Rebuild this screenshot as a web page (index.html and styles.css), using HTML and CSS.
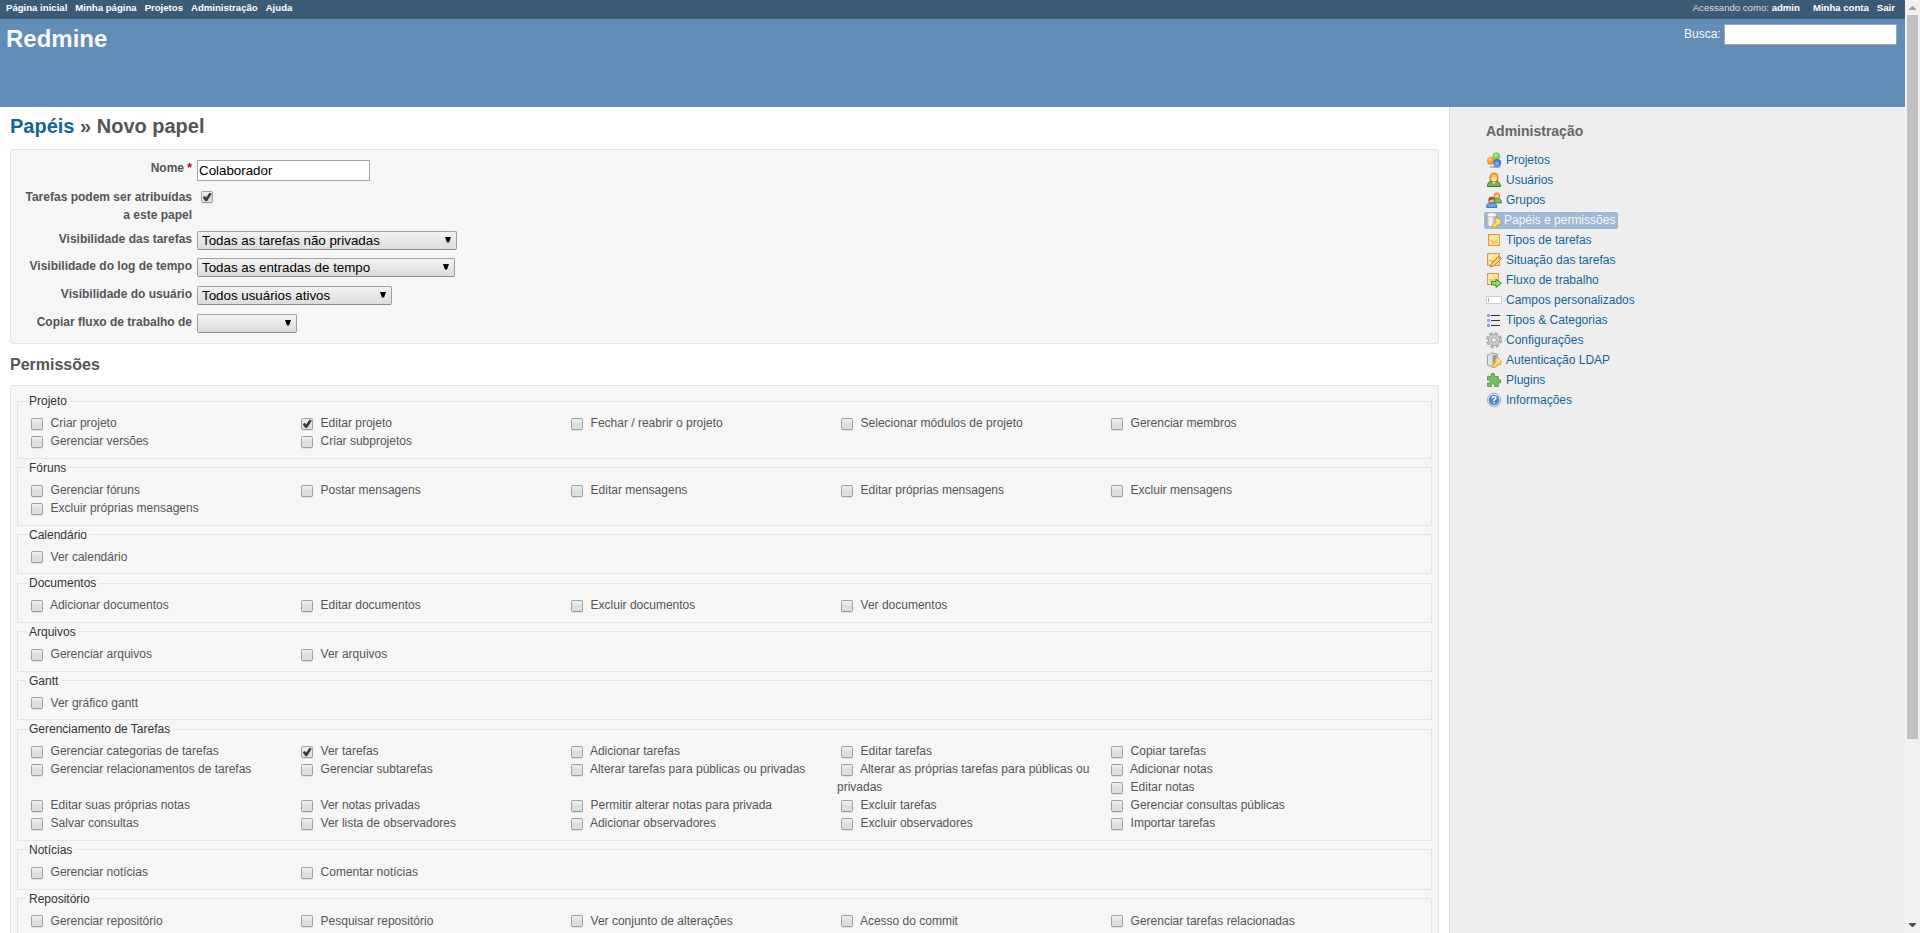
FILE: index.html
```html
<!DOCTYPE html>
<html lang="pt-BR">
<head>
<meta charset="utf-8">
<title>Redmine</title>
<link rel="stylesheet" href="styles.css">
</head>
<body>
<div class="page">
  <nav class="top-menu">
    <div class="menu"><a>Página inicial</a><a>Minha página</a><a>Projetos</a><a>Administração</a><a>Ajuda</a></div>
    <div class="menu account"><span class="logged">Acessando como: <a>admin</a></span><a>Minha conta</a><a>Sair</a></div>
  </nav>
  <header class="header">
    <h1>Redmine</h1>
    <form class="search"><label>Busca:</label><input type="text" class="text-input"></form>
  </header>
  <div class="main">
    <main class="content">
      <h2><a>Papéis</a> » Novo papel</h2>
      <div class="box tabular">
        <div class="row row-name"><label>Nome <span class="required">*</span></label><input type="text" class="text-input" value="Colaborador"></div>
        <div class="row row-assign"><label>Tarefas podem ser atribuídas a este papel</label><input type="checkbox" checked></div>
        <div class="row row-issues"><label>Visibilidade das tarefas</label><div class="select w-issues"><span>Todas as tarefas não privadas</span><svg width="6" height="6" viewBox="0 0 6 6"><path d="M0 0h6L4 5.500H2z"/></svg></div></div>
        <div class="row row-time"><label>Visibilidade do log de tempo</label><div class="select w-time"><span>Todas as entradas de tempo</span><svg width="6" height="6" viewBox="0 0 6 6"><path d="M0 0h6L4 5.500H2z"/></svg></div></div>
        <div class="row row-time"><label>Visibilidade do usuário</label><div class="select w-users"><span>Todos usuários ativos</span><svg width="6" height="6" viewBox="0 0 6 6"><path d="M0 0h6L4 5.500H2z"/></svg></div></div>
        <div class="row row-time"><label>Copiar fluxo de trabalho de</label><div class="select w-copy"><span></span><svg width="6" height="6" viewBox="0 0 6 6"><path d="M0 0h6L4 5.500H2z"/></svg></div></div>
      </div>
      <h3>Permissões</h3>
      <div class="box permissions">
        <fieldset><legend>Projeto</legend>
          <label><input type="checkbox"> Criar projeto</label>
          <label><input type="checkbox" checked> Editar projeto</label>
          <label><input type="checkbox"> Fechar / reabrir o projeto</label>
          <label><input type="checkbox"> Selecionar módulos de projeto</label>
          <label><input type="checkbox"> Gerenciar membros</label>
          <label><input type="checkbox"> Gerenciar versões</label>
          <label><input type="checkbox"> Criar subprojetos</label>
        </fieldset>
        <fieldset><legend>Fóruns</legend>
          <label><input type="checkbox"> Gerenciar fóruns</label>
          <label><input type="checkbox"> Postar mensagens</label>
          <label><input type="checkbox"> Editar mensagens</label>
          <label><input type="checkbox"> Editar próprias mensagens</label>
          <label><input type="checkbox"> Excluir mensagens</label>
          <label><input type="checkbox"> Excluir próprias mensagens</label>
        </fieldset>
        <fieldset><legend>Calendário</legend>
          <label><input type="checkbox"> Ver calendário</label>
        </fieldset>
        <fieldset><legend>Documentos</legend>
          <label><input type="checkbox"> Adicionar documentos</label>
          <label><input type="checkbox"> Editar documentos</label>
          <label><input type="checkbox"> Excluir documentos</label>
          <label><input type="checkbox"> Ver documentos</label>
        </fieldset>
        <fieldset><legend>Arquivos</legend>
          <label><input type="checkbox"> Gerenciar arquivos</label>
          <label><input type="checkbox"> Ver arquivos</label>
        </fieldset>
        <fieldset><legend>Gantt</legend>
          <label><input type="checkbox"> Ver gráfico gantt</label>
        </fieldset>
        <fieldset><legend>Gerenciamento de Tarefas</legend>
          <label><input type="checkbox"> Gerenciar categorias de tarefas</label>
          <label><input type="checkbox" checked> Ver tarefas</label>
          <label><input type="checkbox"> Adicionar tarefas</label>
          <label><input type="checkbox"> Editar tarefas</label>
          <label><input type="checkbox"> Copiar tarefas</label>
          <label><input type="checkbox"> Gerenciar relacionamentos de tarefas</label>
          <label><input type="checkbox"> Gerenciar subtarefas</label>
          <label><input type="checkbox"> Alterar tarefas para públicas ou privadas</label>
          <label><input type="checkbox"> Alterar as próprias tarefas para públicas ou privadas</label>
          <label><input type="checkbox"> Adicionar notas</label>
          <label><input type="checkbox"> Editar notas</label>
          <label><input type="checkbox"> Editar suas próprias notas</label>
          <label><input type="checkbox"> Ver notas privadas</label>
          <label><input type="checkbox"> Permitir alterar notas para privada</label>
          <label><input type="checkbox"> Excluir tarefas</label>
          <label><input type="checkbox"> Gerenciar consultas públicas</label>
          <label><input type="checkbox"> Salvar consultas</label>
          <label><input type="checkbox"> Ver lista de observadores</label>
          <label><input type="checkbox"> Adicionar observadores</label>
          <label><input type="checkbox"> Excluir observadores</label>
          <label><input type="checkbox"> Importar tarefas</label>
        </fieldset>
        <fieldset><legend>Notícias</legend>
          <label><input type="checkbox"> Gerenciar notícias</label>
          <label><input type="checkbox"> Comentar notícias</label>
        </fieldset>
        <fieldset><legend>Repositório</legend>
          <label><input type="checkbox"> Gerenciar repositório</label>
          <label><input type="checkbox"> Pesquisar repositório</label>
          <label><input type="checkbox"> Ver conjunto de alterações</label>
          <label><input type="checkbox"> Acesso do commit</label>
          <label><input type="checkbox"> Gerenciar tarefas relacionadas</label>
        </fieldset>
      </div>
    </main>
    <aside class="sidebar">
      <h3>Administração</h3>
      <svg class="defs" width="0" height="0">
        <defs>
          <radialGradient id="orange" cx=".4" cy=".35"><stop offset="0" stop-color="#ffd27a"/><stop offset="1" stop-color="#f5921a"/></radialGradient>
          <radialGradient id="green" cx=".45" cy=".4"><stop offset="0" stop-color="#c4f19a"/><stop offset="1" stop-color="#66c338"/></radialGradient>
          <radialGradient id="blue" cx=".45" cy=".6"><stop offset="0" stop-color="#8dbcff"/><stop offset="1" stop-color="#2f70e0"/></radialGradient>
          <linearGradient id="note" x1="0" y1="0" x2="1" y2="1"><stop offset="0" stop-color="#fff6c0"/><stop offset="1" stop-color="#f5c93a"/></linearGradient>
          <linearGradient id="metal"><stop offset="0" stop-color="#c4c4c4"/><stop offset=".35" stop-color="#fafafa"/><stop offset="1" stop-color="#a8a8a8"/></linearGradient>
          <symbol id="key" viewBox="0 0 9 10"><path d="M4.500.5 8.500 4 7.500 7 5 7.200 3 9.500H.5V7.200L3 5 2.500 2.500z" fill="#fbd863" stroke="#d99434" stroke-width=".8"/><path d="M4.800 2.200l2 1.800" stroke="#fff6cf" stroke-width="1.100"/></symbol>
          <symbol id="sheet" viewBox="0 0 12 12"><path d="M.6.6h10.800v10.800H.6z" fill="#fff3cf" stroke="#e39b43" stroke-width="1.200"/><path d="M2.200 2.200h7.600v7.600H5L2.200 7z" fill="url(#note)"/><path d="M2.200 7H5v2.800z" fill="#fff" stroke="#d99a32" stroke-width=".7"/></symbol>
        </defs>
      </svg>
      <ul>
        <li><a><svg viewBox="0 0 16 16"><ellipse cx="9" cy="15" rx="6" ry=".7" fill="#999"/><circle cx="10.300" cy="4.200" r="3.600" fill="url(#green)" stroke="#7ccc55" stroke-width=".5"/><circle cx="4.800" cy="8.700" r="3.900" fill="url(#orange)"/><circle cx="11.200" cy="11" r="3.900" fill="url(#blue)"/></svg>Projetos</a></li>
        <li><a><svg viewBox="0 0 16 16"><path d="M1.500 14.500q0-5 4-5.500h4q5 .5 5 5.500z" fill="#6fb858" stroke="#347a2a"/><path d="M5.500 9.500 7.800 12l2.500-2.500" fill="#eaf7dc"/><path d="M4 8.500V4q.6-3 4-3 3.500 0 3.900 3v4.500l-2 1.300H6z" fill="#eda322" stroke="#c87512" stroke-width=".8"/><circle cx="8" cy="6.500" r="2.700" fill="#fddcae"/><path d="M5.200 5.500q3 .3 4-1.500l1.700 1.500V3.500q-3-2.500-5.700 0z" fill="#ffc43d"/></svg>Usuários</a></li>
        <li><a><svg viewBox="0 0 16 16"><path d="M7 11q0-4.500 3-4.500h2q3.500 0 3.500 4.500z" fill="#73be5e" stroke="#3b8330" stroke-width=".8"/><circle cx="11" cy="3.800" r="2.900" fill="#f5c78c" stroke="#b06f22" stroke-width=".8"/><path d="M8 4Q8 .5 11 .5t3 3.500l-2-1.500z" fill="#f2a51d"/><path d="M.5 15.500q0-4.700 3.500-4.700h2.500q4.500 0 4.500 4.700z" fill="#60a7f2" stroke="#2b63ad" stroke-width=".8"/><circle cx="5.600" cy="8.200" r="2.900" fill="#f3c08f" stroke="#7c3e20" stroke-width=".8"/><path d="M2.700 8.700q-.2-4 3-4t3 4L7.100 6.900z" fill="#96512c"/></svg>Grupos</a></li>
        <li><a class="selected"><svg viewBox="0 0 16 16"><path d="M1 3v9.800q0 1.700 4.700 1.700t4.800-1.700V3z" fill="url(#metal)" stroke="#999" stroke-width=".7"/><ellipse cx="5.750" cy="2.800" rx="4.700" ry="2.100" fill="#f7f7f7" stroke="#aaa" stroke-width=".7"/><use href="#key" x="6" y="5" width="10" height="11"/></svg>Papéis e permissões</a></li>
        <li><a><svg viewBox="0 0 16 16"><use href="#sheet" x="2" y="2" width="12" height="12"/></svg>Tipos de tarefas</a></li>
        <li><a><svg viewBox="0 0 16 16"><use href="#sheet" x="1" y="1" width="13" height="13"/><path d="M4.500 15l1-3.500 7.300-7.300 2.700 2.300-7.500 7.300z" fill="#f9cf76" stroke="#ad6c22" stroke-width=".8"/><path d="M12.300 4.800l2.500 2.100" stroke="#d8886d" stroke-width="1.100"/></svg>Situação das tarefas</a></li>
        <li><a><svg viewBox="0 0 16 16"><use href="#sheet" x="1" y="1" width="12" height="12"/><path d="M5.500 9.500h4.500V7l5.500 4.300-5.500 4.200V13H5.500z" fill="#9bd66c" stroke="#31802b" stroke-width=".9"/></svg>Fluxo de trabalho</a></li>
        <li><a><svg viewBox="0 0 16 16"><path d="M.5 4.500h15v7H.5z" fill="#fff" stroke="#ccc"/><path d="M2.500 6v4" stroke="#999" stroke-width=".8"/></svg>Campos personalizados</a></li>
        <li><a><svg viewBox="0 0 16 16"><path d="M5 3.500h9m-9 5h9m-9 5h9" stroke="#333" stroke-width="1"/><path d="M1 2h3v3H1zm0 5h3v3H1zm0 5h3v3H1z" fill="#83aaea"/></svg>Tipos &amp; Categorias</a></li>
        <li><a><svg viewBox="0 0 16 16"><circle cx="8" cy="8" r="6.500" fill="none" stroke="#8e8e8e" stroke-width="2.800" stroke-dasharray="2.900 2.205"/><circle cx="8" cy="8" r="6.300" fill="none" stroke="#c4c4c4" stroke-width="2" stroke-dasharray="1.900 3.048" stroke-dashoffset="-.4"/><circle cx="8" cy="8" r="4.100" fill="none" stroke="#909090" stroke-width="4"/><circle cx="8" cy="8" r="4.100" fill="none" stroke="#cbcbcb" stroke-width="3"/></svg>Configurações</a></li>
        <li><a><svg viewBox="0 0 16 16"><path d="M1.500 3.500 6 .8l5.500 1.400v11L6.500 15l-5-2z" fill="#e2e2e2" stroke="#8b8b8b" stroke-width=".8"/><path d="M6.300 2.700l5.200-.5v11l-5.200 1.600z" fill="#b4b4b4"/><path d="M7.300 5l3-.6m-3 2.600 3-.5m-3 2.500 3-.4" stroke="#666" stroke-width=".8"/><use href="#key" x="6" y="5" width="10" height="11"/></svg>Autenticação LDAP</a></li>
        <li><a><svg viewBox="0 0 16 16"><path d="M1.500 4.500h4V4Q4.300 1.300 6.800 1.200 9.400 1.300 8.300 4v.5h4V8q2.800-1.100 2.700 1.400 0 2.300-2.700 1.300v3.800H8.700q1-2.800-1.700-2.900-2.500.1-1.600 2.900H1.500V11q2.700.9 2.700-1.500Q4 7.200 1.500 8.200z" fill="#6dc25c" stroke="#49963f" stroke-width=".8"/></svg>Plugins</a></li>
        <li><a><svg viewBox="0 0 16 16"><circle cx="8" cy="8" r="6.800" fill="#d3e0f1" stroke="#8ba6cc" stroke-width=".8"/><circle cx="8" cy="8" r="5.300" fill="#5585c4"/><path d="M6 6.400Q6.200 4.800 8 4.800t1.900 1.500Q9.900 7.300 8 8v1.300M8 10.300v1.400" fill="none" stroke="#fff" stroke-width="1.400"/></svg>Informações</a></li>
      </ul>
    </aside>
  </div>
</div>
<div class="scrollbar">
  <svg class="arrow-up" width="7" height="4" viewBox="0 0 7 4"><path d="M3 0h1l3 3v1H0V3z"/></svg>
  <div class="thumb"></div>
  <svg class="arrow-down" width="7" height="4" viewBox="0 0 7 4"><path d="M0 0h7v1L4 4H3L0 1z"/></svg>
</div>
</body>
</html>
```
FILE: styles.css
```css
html, body {
  height: 100%;
}

body {
  display: flex;
  margin: 0;
  overflow: hidden;
  background: #fff;
  color: #555;
  font: 12px/18px "Liberation Sans", Arial, sans-serif;
}

h1, h2, h3, ul {
  margin: 0;
  padding: 0;
}

a {
  color: #169;
  text-decoration: none;
}

.page {
  display: flex;
  flex: 1;
  flex-direction: column;
  min-width: 0;
  height: 933px;
  overflow: hidden;
}

/* Top menu and header */
.top-menu {
  display: flex;
  flex: none;
  justify-content: space-between;
  box-sizing: border-box;
  height: 19px;
  padding: 1px 10px 0 6px;
  background: #3e5b76;
  color: #ddd;
  font-size: 9.6px;
  line-height: 14px;
}

.menu {
  display: flex;
  gap: 8px;
}

.menu a {
  color: #fff;
  font-weight: bold;
}

.logged {
  margin-right: 5px;
}

.header {
  display: flex;
  flex: none;
  justify-content: space-between;
  box-sizing: border-box;
  height: 88px;
  padding: 5px 8px 0 6px;
  background: #628db6;
  color: #f8f8f8;
}

.header h1 {
  font-size: 24px;
  line-height: 29px;
}

.search {
  display: flex;
  gap: 3.3px;
}

.search label {
  padding-top: 1px;
}

.text-input {
  box-sizing: border-box;
  width: 173px;
  height: 21px;
  margin: 0;
  padding: 1px;
  border: 1px solid #a5a5a5;
  background: #fff;
  color: #000;
  font: 13.333px "Liberation Sans", Arial, sans-serif;
}

.main {
  display: flex;
  flex: 1;
  min-height: 0;
}

/* Content */
.content {
  flex: 1;
  padding: 6px 10px 0;
  overflow: hidden;
}

.content h2 {
  margin-bottom: 10px;
  color: #555;
  font-size: 20px;
  line-height: 26px;
}

.content h3 {
  margin: 10px 0;
  color: #555;
  font-size: 16px;
  line-height: 21px;
}

.box {
  box-sizing: border-box;
  padding: 6px;
  border: 1px solid #e4e4e4;
  border-radius: 3px;
  background: #f6f6f6;
}

.permissions {
  padding-top: 6.15px;
}

.tabular {
  height: 195px;
  padding-top: 9px;
}

.row {
  display: grid;
  grid-template-columns: 175px 1fr;
  column-gap: 5px;
  align-items: start;
}

.row > label {
  font-weight: bold;
  text-align: right;
}

.row > :last-child {
  margin-top: 1px;
}

.row-name {
  height: 29px;
}

.row-assign {
  height: 42px;
}

.row-assign input[type="checkbox"] {
  margin-top: 3px;
}

.row-issues {
  height: 27px;
}

.row-time {
  height: 28px;
}

.required {
  color: #b00;
}

.select {
  display: flex;
  justify-content: space-between;
  box-sizing: border-box;
  height: 19px;
  padding: 0 5px 0 4px;
  border: 1px solid #a0a0a0;
  border-bottom-color: #8c8c8c;
  border-radius: 2px;
  background: linear-gradient(#f2f2f2, #dcdcdc);
  color: #000;
  font-size: 13.333px;
  line-height: 17px;
}

.select svg {
  margin-top: 5px;
}

.w-issues { width: 260px; }
.w-time { width: 258px; }
.w-users { width: 195px; }
.w-copy { width: 100px; }

/* Permission groups */
fieldset {
  min-width: 0;
  margin: 0;
  padding: 4.2px 9px 7.5px;
  border: 1px solid #e4e4e4;
}

fieldset::after {
  display: block;
  clear: both;
  content: "";
}

legend {
  padding: 0 2px;
  color: #333;
}

fieldset label {
  float: left;
  width: 270px;
}

input[type="checkbox"] {
  box-sizing: border-box;
  width: 12px;
  height: 12px;
  margin: 3.5px 4.25px 0 4px;
  appearance: none;
  border: 1px solid rgba(0, 0, 0, 0.28);
  border-bottom-color: rgba(0, 0, 0, 0.34);
  border-radius: 2px;
  background: linear-gradient(#ededed 10%, #dedede 50%);
  box-shadow: 0 1px 0 rgba(0, 0, 0, 0.08);
  vertical-align: top;
}

input[type="checkbox"]:checked::before {
  display: block;
  width: 10px;
  height: 10px;
  background: #3c3c3c;
  clip-path: polygon(8% 54%, 27% 40%, 42% 56%, 76% 7%, 98% 18%, 52% 90%, 33% 92%);
  content: "";
}

/* Sidebar */
.sidebar {
  flex: none;
  box-sizing: border-box;
  width: 456px;
  padding: 14px 34px 0;
  border-left: 1px solid #ddd;
  background: #eee;
}

.sidebar h3 {
  margin: 0 0 10px 2px;
  color: #666;
  font-size: 14px;
  line-height: 20px;
}

.sidebar ul {
  list-style: none;
}

.sidebar li {
  height: 20px;
}

.sidebar a {
  display: inline-flex;
  gap: 4px;
  height: 17px;
  margin-top: 1px;
  padding: 0 3px 0 2px;
  border-radius: 2px;
  line-height: 16px;
}

.sidebar a svg {
  width: 16px;
  height: 16px;
}

.sidebar .selected {
  gap: 2px;
  background: #9db9d5;
  color: #f8f8f8;
}

.defs {
  display: block;
}

/* Window scrollbar */
.scrollbar {
  display: flex;
  flex: none;
  flex-direction: column;
  align-items: center;
  box-sizing: border-box;
  width: 15px;
  height: 933px;
  padding: 6px 0;
  background: #f1f1f1;
}

.arrow-up {
  fill: #a3a3a3;
}

.thumb {
  width: 11px;
  height: 724px;
  margin: 5px 0 auto;
  background: #c1c1c1;
}

.arrow-down {
  fill: #505050;
}
```
